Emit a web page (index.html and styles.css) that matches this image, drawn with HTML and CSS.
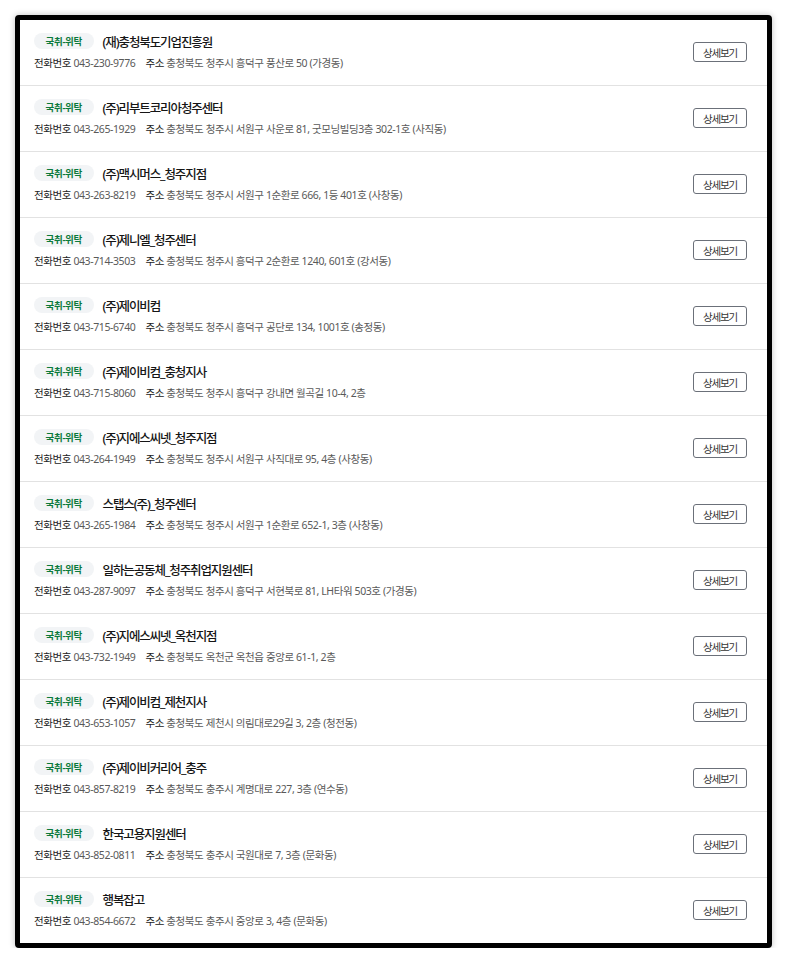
FILE: index.html
```html
<!DOCTYPE html>
<html lang="ko">
<head>
    <meta charset="utf-8">
    <meta name="viewport" content="width=device-width, initial-scale=1.0">
    <title>위탁기관 목록</title>
    <link rel="stylesheet" href="styles.css">
</head>
<body>
    <div class="frame">
        <ul class="org-list">
            <li class="org">
                <div class="org-info">
                    <div class="org-head"><span class="badge">국취-위탁</span><span class="org-name">(재)충청북도기업진흥원</span></div>
                    <div class="org-meta"><span class="label">전화번호</span> <span class="value">043-230-9776</span><span class="label addr">주소</span> <span class="value">충청북도 청주시 흥덕구 풍산로 50 (가경동)</span></div>
                </div>
                <button class="btn-detail">상세보기</button>
            </li>
            <li class="org">
                <div class="org-info">
                    <div class="org-head"><span class="badge">국취-위탁</span><span class="org-name">(주)리부트코리아청주센터</span></div>
                    <div class="org-meta"><span class="label">전화번호</span> <span class="value">043-265-1929</span><span class="label addr">주소</span> <span class="value">충청북도 청주시 서원구 사운로 81, 굿모닝빌딩3층 302-1호 (사직동)</span></div>
                </div>
                <button class="btn-detail">상세보기</button>
            </li>
            <li class="org">
                <div class="org-info">
                    <div class="org-head"><span class="badge">국취-위탁</span><span class="org-name">(주)맥시머스_청주지점</span></div>
                    <div class="org-meta"><span class="label">전화번호</span> <span class="value">043-263-8219</span><span class="label addr">주소</span> <span class="value">충청북도 청주시 서원구 1순환로 666, 1등 401호 (사창동)</span></div>
                </div>
                <button class="btn-detail">상세보기</button>
            </li>
            <li class="org">
                <div class="org-info">
                    <div class="org-head"><span class="badge">국취-위탁</span><span class="org-name">(주)제니엘_청주센터</span></div>
                    <div class="org-meta"><span class="label">전화번호</span> <span class="value">043-714-3503</span><span class="label addr">주소</span> <span class="value">충청북도 청주시 흥덕구 2순환로 1240, 601호 (강서동)</span></div>
                </div>
                <button class="btn-detail">상세보기</button>
            </li>
            <li class="org">
                <div class="org-info">
                    <div class="org-head"><span class="badge">국취-위탁</span><span class="org-name">(주)제이비컴</span></div>
                    <div class="org-meta"><span class="label">전화번호</span> <span class="value">043-715-6740</span><span class="label addr">주소</span> <span class="value">충청북도 청주시 흥덕구 공단로 134, 1001호 (송정동)</span></div>
                </div>
                <button class="btn-detail">상세보기</button>
            </li>
            <li class="org">
                <div class="org-info">
                    <div class="org-head"><span class="badge">국취-위탁</span><span class="org-name">(주)제이비컴_충청지사</span></div>
                    <div class="org-meta"><span class="label">전화번호</span> <span class="value">043-715-8060</span><span class="label addr">주소</span> <span class="value">충청북도 청주시 흥덕구 강내면 월곡길 10-4, 2층</span></div>
                </div>
                <button class="btn-detail">상세보기</button>
            </li>
            <li class="org">
                <div class="org-info">
                    <div class="org-head"><span class="badge">국취-위탁</span><span class="org-name">(주)지에스씨넷_청주지점</span></div>
                    <div class="org-meta"><span class="label">전화번호</span> <span class="value">043-264-1949</span><span class="label addr">주소</span> <span class="value">충청북도 청주시 서원구 사직대로 95, 4층 (사창동)</span></div>
                </div>
                <button class="btn-detail">상세보기</button>
            </li>
            <li class="org">
                <div class="org-info">
                    <div class="org-head"><span class="badge">국취-위탁</span><span class="org-name">스탭스(주)_청주센터</span></div>
                    <div class="org-meta"><span class="label">전화번호</span> <span class="value">043-265-1984</span><span class="label addr">주소</span> <span class="value">충청북도 청주시 서원구 1순환로 652-1, 3층 (사창동)</span></div>
                </div>
                <button class="btn-detail">상세보기</button>
            </li>
            <li class="org">
                <div class="org-info">
                    <div class="org-head"><span class="badge">국취-위탁</span><span class="org-name">일하는공동체_청주취업지원센터</span></div>
                    <div class="org-meta"><span class="label">전화번호</span> <span class="value">043-287-9097</span><span class="label addr">주소</span> <span class="value">충청북도 청주시 흥덕구 서현북로 81, LH타워 503호 (가경동)</span></div>
                </div>
                <button class="btn-detail">상세보기</button>
            </li>
            <li class="org">
                <div class="org-info">
                    <div class="org-head"><span class="badge">국취-위탁</span><span class="org-name">(주)지에스씨넷_옥천지점</span></div>
                    <div class="org-meta"><span class="label">전화번호</span> <span class="value">043-732-1949</span><span class="label addr">주소</span> <span class="value">충청북도 옥천군 옥천읍 중앙로 61-1, 2층</span></div>
                </div>
                <button class="btn-detail">상세보기</button>
            </li>
            <li class="org">
                <div class="org-info">
                    <div class="org-head"><span class="badge">국취-위탁</span><span class="org-name">(주)제이비컴_제천지사</span></div>
                    <div class="org-meta"><span class="label">전화번호</span> <span class="value">043-653-1057</span><span class="label addr">주소</span> <span class="value">충청북도 제천시 의림대로29길 3, 2층 (청전동)</span></div>
                </div>
                <button class="btn-detail">상세보기</button>
            </li>
            <li class="org">
                <div class="org-info">
                    <div class="org-head"><span class="badge">국취-위탁</span><span class="org-name">(주)제이비커리어_충주</span></div>
                    <div class="org-meta"><span class="label">전화번호</span> <span class="value">043-857-8219</span><span class="label addr">주소</span> <span class="value">충청북도 충주시 계명대로 227, 3층 (연수동)</span></div>
                </div>
                <button class="btn-detail">상세보기</button>
            </li>
            <li class="org">
                <div class="org-info">
                    <div class="org-head"><span class="badge">국취-위탁</span><span class="org-name">한국고용지원센터</span></div>
                    <div class="org-meta"><span class="label">전화번호</span> <span class="value">043-852-0811</span><span class="label addr">주소</span> <span class="value">충청북도 충주시 국원대로 7, 3층 (문화동)</span></div>
                </div>
                <button class="btn-detail">상세보기</button>
            </li>
            <li class="org">
                <div class="org-info">
                    <div class="org-head"><span class="badge">국취-위탁</span><span class="org-name">행복잡고</span></div>
                    <div class="org-meta"><span class="label">전화번호</span> <span class="value">043-854-6672</span><span class="label addr">주소</span> <span class="value">충청북도 충주시 중앙로 3, 4층 (문화동)</span></div>
                </div>
                <button class="btn-detail">상세보기</button>
            </li>
        </ul>
    </div>
</body>
</html>
```

FILE: styles.css
```css
body {
    margin: 0;
    background: #fff;
    font-family: "Noto Sans", "Noto Sans CJK KR", sans-serif;
    color: #222;
}
.frame {
    margin: 15px 0 0 15px;
    width: 747px;
    border: 5px solid #000;
    border-radius: 4px;
    background: #fff;
    box-shadow: 0 0 6px rgba(0, 0, 0, 0.25);
}
.org-list {
    list-style: none;
    margin: 0;
    padding: 0;
}
.org {
    display: flex;
    align-items: center;
    justify-content: space-between;
    height: 66px;
    box-sizing: border-box;
    padding: 11px 20px 12px 14px;
    border-bottom: 1px solid #e2e2e2;
}
.org:last-child {
    border-bottom: none;
    height: 65px;
}
.org-info {
    display: flex;
    flex-direction: column;
    gap: 2px;
}
.org-head {
    display: flex;
    align-items: center;
    height: 20px;
}
.badge {
    display: inline-flex;
    align-items: center;
    height: 16px;
    padding: 0 11.5px;
    border-radius: 8px;
    background: #f2f4f6;
    color: #0b7a3b;
    font-size: 9.5px;
    font-weight: 700;
    letter-spacing: -0.3px;
}
.org-name {
    margin-left: 9px;
    font-size: 12.5px;
    font-weight: 500;
    color: #151515;
    letter-spacing: -1.1px;
}
.org-meta {
    height: 20px;
    line-height: 20px;
    font-size: 10.5px;
    letter-spacing: -0.4px;
    white-space: nowrap;
}
.label {
    color: #222;
}
.label.addr {
    margin-left: 10px;
}
.value {
    color: #595959;
}
.btn-detail {
    width: 54px;
    height: 20px;
    padding: 0;
    border: 1px solid #6b7079;
    border-radius: 3px;
    background: #fff;
    color: #333;
    font-family: inherit;
    font-size: 10.5px;
    letter-spacing: -1.2px;
    cursor: pointer;
}
```
